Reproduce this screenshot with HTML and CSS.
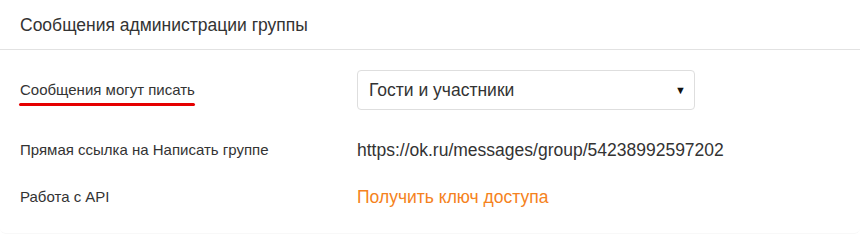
FILE: index.html
```html
<!DOCTYPE html>
<html lang="ru">
<head>
<meta charset="utf-8">
<link rel="stylesheet" href="styles.css">
</head>
<body>
<div class="card">
  <div class="card-head">Сообщения администрации группы</div>
  <div class="card-body">
    <div class="row row-select">
      <div class="label"><span class="marked">Сообщения могут писать</span></div>
      <div class="value">
        <div class="select">
          <span>Гости и участники</span>
          <span class="arrow">▼</span>
        </div>
      </div>
    </div>
    <div class="row">
      <div class="label">Прямая ссылка на Написать группе</div>
      <div class="value">https://ok.ru/messages/group/54238992597202</div>
    </div>
    <div class="row">
      <div class="label">Работа с API</div>
      <div class="value link">Получить ключ доступа</div>
    </div>
  </div>
</div>
</body>
</html>
```
FILE: styles.css
```css
html, body {
  margin: 0;
  padding: 0;
  background: #ffffff;
}
body {
  font-family: "Liberation Sans", Arial, sans-serif;
  color: #333333;
  width: 860px;
  height: 235px;
  overflow: hidden;
}
.card {
  width: 860px;
  height: 234px;
  box-sizing: border-box;
  border-bottom: 1px solid #f8f8f8;
  border-radius: 0 0 6px 6px;
  background: #fff;
}
.card-head {
  height: 50px;
  box-sizing: border-box;
  padding: 15px 20px 0;
  font-size: 17.5px;
  line-height: 21px;
  border-bottom: 1px solid #e2e2e2;
}
.card-body {
  padding: 20px 0 0 20px;
}
.row {
  display: flex;
  align-items: center;
  height: 47px;
}
.row-select {
  height: 40px;
  margin-bottom: 16px;
}
.label {
  width: 337px;
  font-size: 15px;
  line-height: 18px;
}
.marked {
  display: inline-block;
  position: relative;
}
.marked::after {
  content: "";
  position: absolute;
  left: -1px;
  right: 0;
  top: 22px;
  height: 3px;
  border-radius: 2px;
  background: #e50000;
}
.value {
  font-size: 17.5px;
  line-height: 22px;
}
.select {
  width: 338px;
  height: 40px;
  box-sizing: border-box;
  border: 1px solid #dedede;
  border-radius: 4px;
  display: flex;
  align-items: center;
  justify-content: space-between;
  padding: 0 8px 0 11px;
}
.arrow {
  font-size: 11px;
  color: #111;
}
.link {
  color: #f58220;
}
```
